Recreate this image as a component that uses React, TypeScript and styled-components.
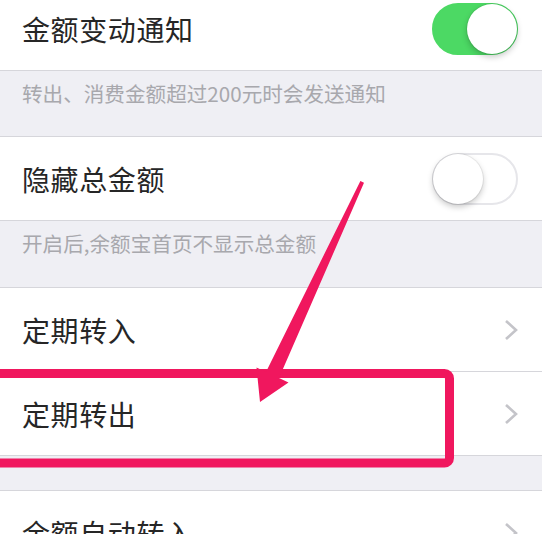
import React from "react";
import styled, { createGlobalStyle } from "styled-components";

const Global = createGlobalStyle`
  html, body { margin: 0; padding: 0; background: #efeff4; }
  body { font-family: "Noto Sans CJK SC", "Noto Sans", sans-serif; }
`;

const Page = styled.div`
  position: relative;
  width: 542px;
  height: 534px;
  overflow: hidden;
  background: #efeff4;
`;

const List = styled.div`
  display: flex;
  flex-direction: column;
  margin-top: -13px;
`;

const Row = styled.div`
  height: 83px;
  display: flex;
  align-items: center;
  justify-content: space-between;
  padding: 0 24px 0 22px;
  background: #fff;
  border-bottom: 1px solid #d6d6db;
  box-sizing: content-box;
`;

const Title = styled.span`
  font-size: 28px;
  color: #262626;
  letter-spacing: 0.6px;
`;

const Footnote = styled.div<{ $h: number }>`
  height: ${(p) => p.$h}px;
  box-sizing: border-box;
  padding: 8px 22px 0;
  font-size: 20.6px;
  line-height: 28px;
  color: #a8a8ad;
  border-bottom: 1px solid #d6d6db;
`;

const Track = styled.div<{ $on: boolean }>`
  position: relative;
  width: 86px;
  height: 52px;
  border-radius: 26px;
  box-sizing: border-box;
  background: ${(p) => (p.$on ? "#4cd964" : "#fff")};
  border: 2px solid ${(p) => (p.$on ? "#4cd964" : "#e6e6ea")};
`;

const Knob = styled.div<{ $on: boolean }>`
  position: absolute;
  top: -1px;
  ${(p) => (p.$on ? "right: -1px;" : "left: -1px;")}
  width: 50px;
  height: 50px;
  border-radius: 50%;
  background: #fff;
  box-shadow: 0 3px 6px rgba(0, 0, 0, 0.22), 0 0 0 1px rgba(0, 0, 0, 0.06);
`;

const Toggle = ({ on }: { on: boolean }) => (
  <Track $on={on}>
    <Knob $on={on} />
  </Track>
);

const Chevron = () => (
  <svg width="14" height="22" viewBox="0 0 14 22">
    <polyline points="2,2 12,11 2,20" fill="none" stroke="#c4c4c9" strokeWidth="2.6" />
  </svg>
);

const Gap = styled.div`
  height: 34px;
  border-bottom: 1px solid #d6d6db;
`;

const Overlay = styled.svg`
  position: absolute;
  left: 0;
  top: 0;
  pointer-events: none;
`;

export default function App() {
  return (
    <Page>
      <Global />
      <List>
        <Row>
          <Title>金额变动通知</Title>
          <Toggle on={true} />
        </Row>
        <Footnote $h={66}>转出、消费金额超过200元时会发送通知</Footnote>
        <Row>
          <Title>隐藏总金额</Title>
          <Toggle on={false} />
        </Row>
        <Footnote $h={67}>开启后,余额宝首页不显示总金额</Footnote>
        <Row>
          <Title>定期转入</Title>
          <Chevron />
        </Row>
        <Row>
          <Title>定期转出</Title>
          <Chevron />
        </Row>
        <Gap />
        <Row>
          <Title>余额自动转入</Title>
          <Chevron />
        </Row>
      </List>
      <Overlay width="542" height="534" viewBox="0 0 542 534">
        <rect x="-20" y="373.5" width="469.5" height="89.5" rx="5" fill="none" stroke="#f0175e" strokeWidth="9" />
        <polygon
          points="360.4,181 364,182.8 279,378 288.5,382.5 260,402 256.5,367.5 266,372"
          fill="#f0175e"
        />
      </Overlay>
    </Page>
  );
}
